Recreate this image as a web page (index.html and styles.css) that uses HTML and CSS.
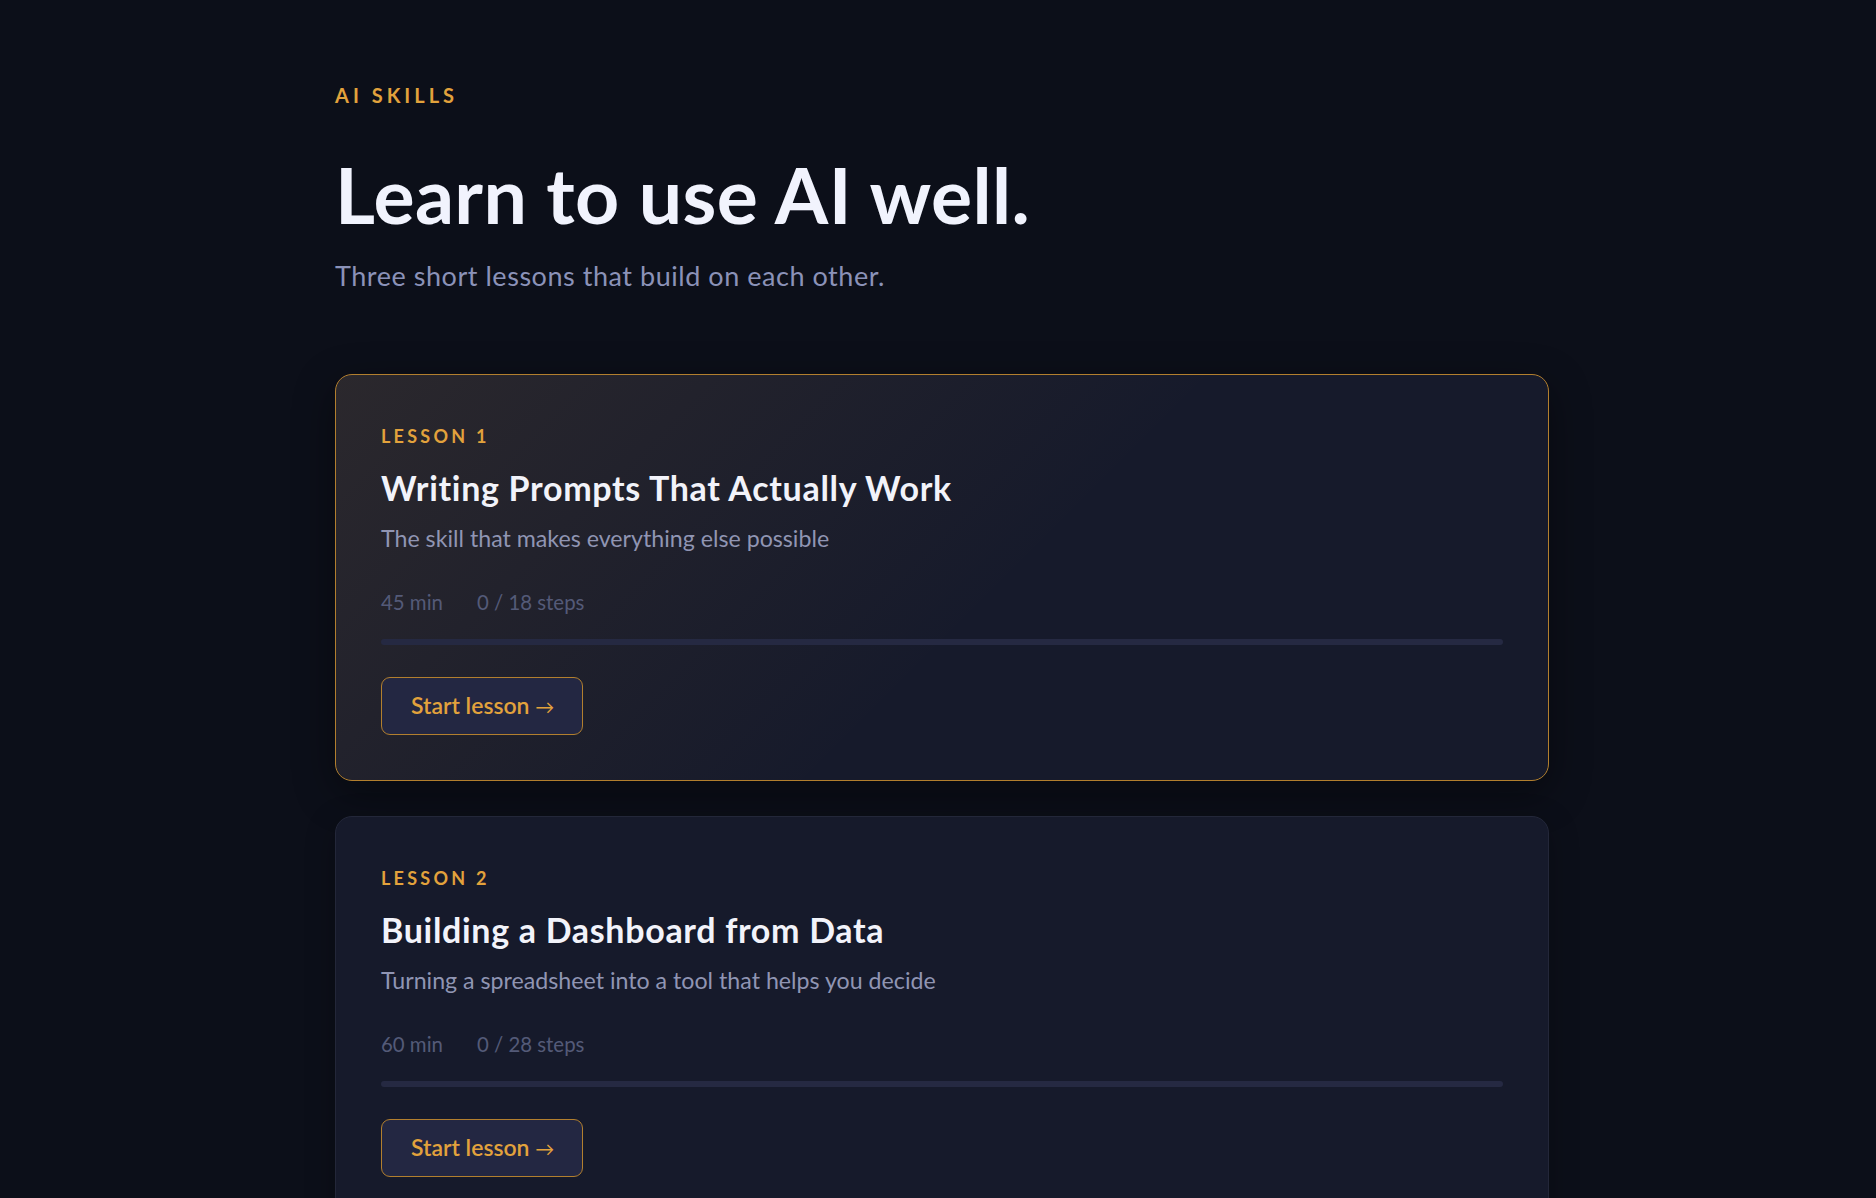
FILE: index.html
```html
<!DOCTYPE html>
<html lang="en">
<head>
    <meta charset="UTF-8">
    <meta name="viewport" content="width=device-width, initial-scale=1.0">
    <title>AI Skills</title>
    <link rel="stylesheet" href="styles.css">
</head>
<body>
    <div class="page">
        <header class="intro">
            <p class="eyebrow">AI Skills</p>
            <h1>Learn to use AI well.</h1>
            <p class="lead">Three short lessons that build on each other.</p>
        </header>

        <div class="lesson-list">
            <div class="lesson-card current">
                <p class="lesson-number">Lesson 1</p>
                <h2>Writing Prompts That Actually Work</h2>
                <p class="lesson-desc">The skill that makes everything else possible</p>
                <div class="lesson-meta">
                    <span>45 min</span>
                    <span>0 / 18 steps</span>
                </div>
                <div class="progress"><div class="progress-fill" style="width: 0%"></div></div>
                <button class="start-button">Start lesson <span class="arrow">&rarr;</span></button>
            </div>

            <div class="lesson-card">
                <p class="lesson-number">Lesson 2</p>
                <h2>Building a Dashboard from Data</h2>
                <p class="lesson-desc">Turning a spreadsheet into a tool that helps you decide</p>
                <div class="lesson-meta">
                    <span>60 min</span>
                    <span>0 / 28 steps</span>
                </div>
                <div class="progress"><div class="progress-fill" style="width: 0%"></div></div>
                <button class="start-button">Start lesson <span class="arrow">&rarr;</span></button>
            </div>
        </div>
    </div>
</body>
</html>
```

FILE: styles.css
```css
body {
    margin: 0;
    padding-left: 8px;
    background-color: #0c0f19;
    font-family: Lato, "Open Sans", sans-serif;
    color: #f1f3fd;
}
.page {
    max-width: 1214px;
    margin: 0 auto;
    padding: 83px 0 80px;
}

/* cabecera */
.intro {
    margin-bottom: 80px;
}
.eyebrow {
    margin: 0;
    font-size: 20px;
    line-height: 24px;
    font-weight: bold;
    letter-spacing: 0.2em;
    text-transform: uppercase;
    color: #e2a23c;
}
h1 {
    margin: 43px 0 0;
    font-size: 77px;
    line-height: 88px;
    font-weight: bold;
    letter-spacing: 0.005em;
    color: #f1f3fd;
}
.lead {
    margin: 20px 0 0;
    font-size: 27px;
    line-height: 36px;
    letter-spacing: 0.02em;
    color: #8b92b8;
}

/* tarjetas */
.lesson-list {
    display: flex;
    flex-direction: column;
    gap: 35px;
}
.lesson-card {
    background-color: #161a2b;
    border: 1px solid #232739;
    border-radius: 17px;
    padding: 45px;
    box-shadow: 0 8px 30px rgba(0,0,0,0.25);
}
.lesson-card.current {
    background-image: linear-gradient(135deg, rgba(226,162,60,0.1), rgba(226,162,60,0) 55%);
    border-color: #b27f2e;
    box-shadow: 0 12px 40px rgba(0,0,0,0.4);
}
.lesson-number {
    margin: 0;
    font-size: 18px;
    line-height: 32px;
    font-weight: bold;
    letter-spacing: 0.18em;
    text-transform: uppercase;
    color: #e2a23c;
}
h2 {
    margin: 15px 0 0;
    font-size: 34px;
    line-height: 42px;
    font-weight: bold;
    letter-spacing: 0.02em;
    color: #f2f3fa;
}
.lesson-desc {
    margin: 13px 0 0;
    font-size: 23.2px;
    line-height: 32px;
    color: #9095b3;
}
.lesson-meta {
    display: flex;
    gap: 34px;
    margin-top: 34px;
    font-size: 20.4px;
    line-height: 28px;
    color: #545a78;
}
.progress {
    height: 6px;
    margin-top: 23px;
    background-color: #252942;
    border-radius: 3px;
    overflow: hidden;
}
.progress-fill {
    height: 100%;
    background-color: #e2a23c;
}
.start-button {
    margin-top: 32px;
    padding: 12px 28px 12px 29px;
    background-color: #232742;
    border: 1px solid #b27f2e;
    border-radius: 9px;
    font-family: inherit;
    font-size: 23px;
    line-height: 31px;
    font-weight: 600;
    color: #e2a23c;
    cursor: pointer;
}
.start-button .arrow {
    font-size: 19px;
    font-weight: 400;
}
.start-button:hover {
    background-color: #2a2e4c;
}
```
